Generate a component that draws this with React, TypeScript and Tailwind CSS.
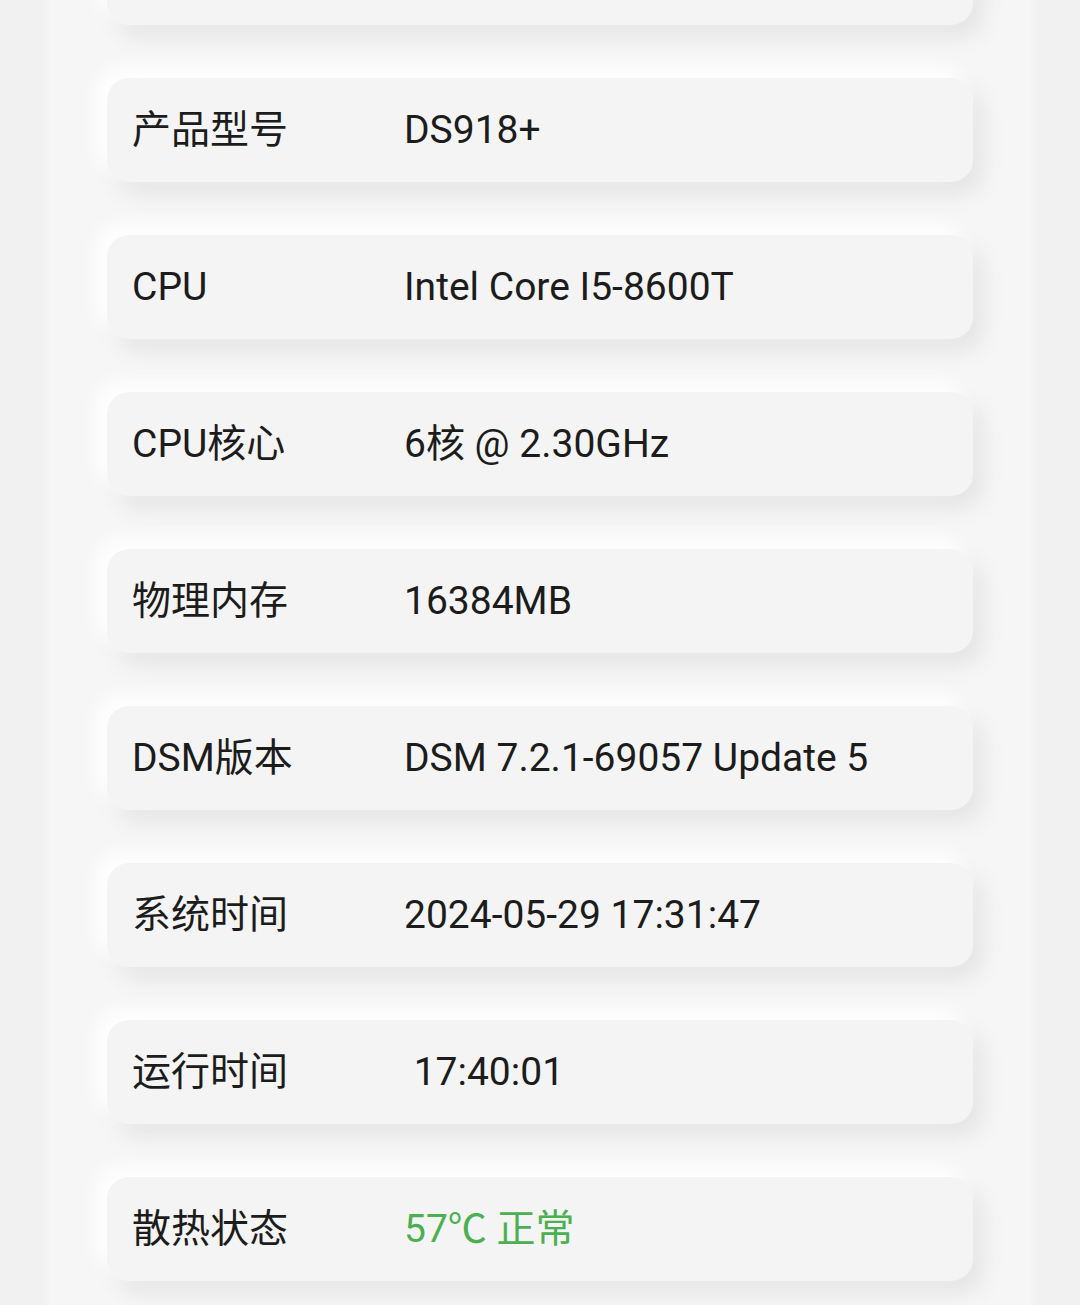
const rows: { label: string; value: string; green?: boolean }[] = [
  { label: "", value: "" },
  { label: "产品型号", value: "DS918+" },
  { label: "CPU", value: "Intel Core I5-8600T" },
  { label: "CPU核心", value: "6核 @ 2.30GHz" },
  { label: "物理内存", value: "16384MB" },
  { label: "DSM版本", value: "DSM 7.2.1-69057 Update 5" },
  { label: "系统时间", value: "2024-05-29 17:31:47" },
  { label: "运行时间", value: "\u00a017:40:01" },
  { label: "散热状态", value: "57℃ 正常", green: true },
];

export default function App() {
  return (
    <div
      className="w-[1080px] h-[1305px] overflow-hidden bg-[#f1f1f1] flex justify-center"
      style={{ fontFamily: 'Roboto, "Noto Sans CJK SC", sans-serif' }}
    >
      <div className="w-[976px] h-[1500px] shrink-0 bg-[#f6f6f6] shadow-[0_0_12px_rgba(255,255,255,0.9)] px-[55px] -mt-[79px] flex flex-col gap-[53px]">
        {rows.map((r, i) => (
          <div
            key={i}
            className="shrink-0 h-[104px] rounded-[22px] bg-[#f4f4f4] flex items-center px-[25px] text-[39px] text-[#1c1c1c] shadow-[-10px_-10px_20px_#ffffff,10px_12px_22px_#e4e4e4]"
          >
            <span className="w-[272px] shrink-0">{r.label}</span>
            <span className={r.green ? "text-[#4caf50]" : ""}>{r.value}</span>
          </div>
        ))}
      </div>
    </div>
  );
}
